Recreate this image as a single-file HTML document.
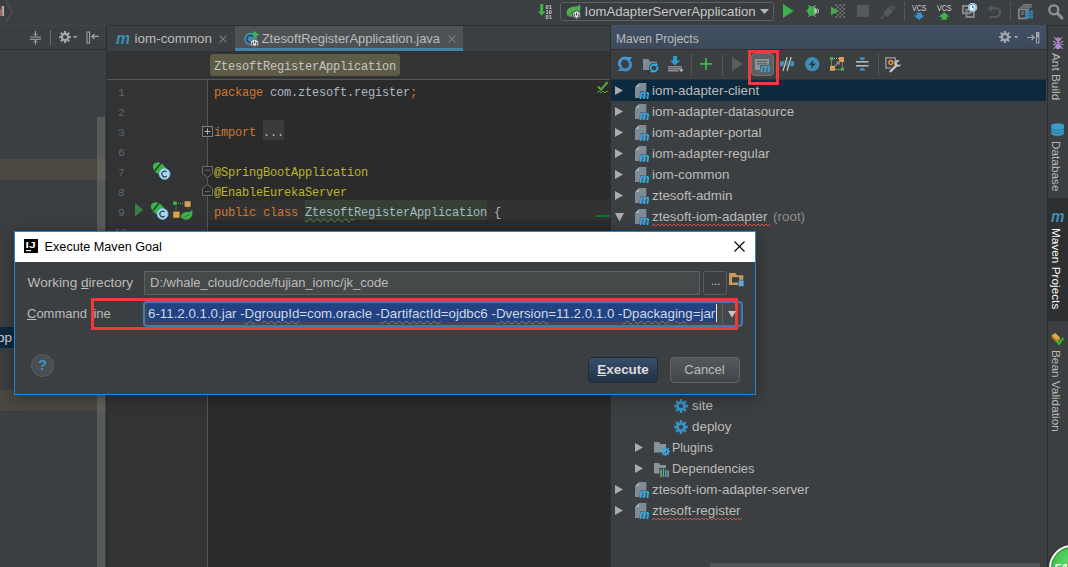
<!DOCTYPE html>
<html>
<head>
<meta charset="utf-8">
<title>Execute Maven Goal</title>
<style>
*{box-sizing:border-box;margin:0;padding:0}
html,body{width:1068px;height:567px;overflow:hidden;background:#3c3f41}
body{position:relative;font-family:"Liberation Sans","Noto Sans CJK SC",sans-serif;font-size:13px;color:#bbbbbb}
.abs{position:absolute}
.ui{font-family:"Liberation Sans","Noto Sans CJK SC",sans-serif;font-size:13.4px;color:#bbbbbb;white-space:nowrap;line-height:16px}
.code{font-family:"Liberation Mono","Noto Sans CJK SC",monospace;font-size:12px;letter-spacing:-0.2px;white-space:pre;line-height:20px;color:#a9b7c6}
.wv{text-decoration:underline wavy #5a8f5a 1px;text-underline-offset:2px}
.kw{color:#cc7832}
.an{color:#bbb529}
.ln{color:#606366;font-size:11.4px}
svg{position:absolute;overflow:visible}
svg text{font-family:"Liberation Sans","Noto Sans CJK SC",sans-serif}
.vt{position:absolute;white-space:nowrap;font-size:11.8px;line-height:14px;transform-origin:0 0;transform:rotate(90deg);color:#bbbbbb}
</style>
</head>
<body>
<!-- top toolbar -->
<div class="abs" style="left:0px;top:0px;width:1068px;height:25px;background:#3c3f41;"></div>
<div class="abs" style="left:0px;top:25px;width:106px;height:1px;background:#45484a;"></div>
<div class="abs" style="left:106px;top:25px;width:505px;height:1px;background:#2d2f30;"></div>
<div class="abs" style="left:1046px;top:25px;width:22px;height:1px;background:#2d2f30;"></div>
<!-- left panel -->
<div class="abs" style="left:0px;top:26px;width:106px;height:541px;background:#3c3f41;"></div>
<div class="abs" style="left:0px;top:49px;width:106px;height:1px;background:#2d2f30;"></div>
<div class="abs" style="left:0px;top:159px;width:106px;height:21px;background:#4a4840;"></div>
<div class="abs" style="left:0px;top:327px;width:14px;height:21px;background:#0d293e;"></div>
<div class="abs" style="left:0px;top:390px;width:106px;height:21px;background:#4a4840;"></div>
<div class="abs ui" style="left:-3px;top:330px;color:#d8dadc">pp</div>
<div class="abs" style="left:97px;top:117px;width:8px;height:450px;background:rgba(128,128,128,0.42);"></div>
<!-- editor -->
<div class="abs" style="left:106px;top:26px;width:505px;height:25px;background:#3c3f41;"></div>
<div class="abs" style="left:106px;top:26px;width:1px;height:541px;background:#2b2b2b;"></div>
<div class="abs" style="left:107px;top:51px;width:504px;height:28px;background:#313335;"></div>
<div class="abs" style="left:107px;top:79px;width:504px;height:1px;background:#555555;"></div>
<div class="abs" style="left:107px;top:80px;width:100px;height:487px;background:#313335;"></div>
<div class="abs" style="left:207px;top:80px;width:1px;height:487px;background:#555555;"></div>
<div class="abs" style="left:208px;top:80px;width:403px;height:487px;background:#2b2b2b;"></div>
<div class="abs" style="left:208px;top:200px;width:402px;height:20px;background:#323232;"></div>
<div class="abs" style="left:305px;top:200px;width:182px;height:20px;background:#344134;"></div>
<div class="abs code ln" style="left:118px;top:83px;">1</div>
<div class="abs code ln" style="left:118px;top:103px;">2</div>
<div class="abs code ln" style="left:118px;top:123px;">3</div>
<div class="abs code ln" style="left:118px;top:143px;">6</div>
<div class="abs code ln" style="left:118px;top:163px;">7</div>
<div class="abs code ln" style="left:118px;top:183px;">8</div>
<div class="abs code ln" style="left:118px;top:203px;">9</div>
<div class="abs code ln" style="left:114px;top:223px;">10</div>
<div class="abs code" style="left:214px;top:83px;"><span class="kw">package</span> com.ztesoft.register<span class="kw">;</span></div>
<div class="abs" style="left:263px;top:120px;width:21px;height:20px;background:#3a3a3a;"></div>
<div class="abs code" style="left:214px;top:123px;"><span class="kw">import</span> ...</div>
<div class="abs code an" style="left:214px;top:163px;">@SpringBootApplication</div>
<div class="abs code an" style="left:214px;top:183px;">@EnableEurekaServer</div>
<div class="abs code" style="left:214px;top:203px;"><span class="kw">public class</span> <span class="wv">Ztesoft</span>RegisterApplication {</div>
<div class="abs" style="left:210px;top:54px;width:190px;height:22px;background:#5e5c46;border-radius:3px"></div>
<div class="abs code" style="left:214px;top:57px;color:#c4c7c8">ZtesoftRegisterApplication</div>
<div class="abs" style="left:235px;top:26px;width:228px;height:25px;background:#4e5254;"></div>
<div class="abs" style="left:235px;top:48px;width:228px;height:3px;background:#4584a6;"></div>
<div class="abs ui" style="left:134.6px;top:31px;">iom-common</div>
<div class="abs ui" style="left:261.7px;top:31px;font-size:12.95px">ZtesoftRegisterApplication.java</div>
<!-- maven panel -->
<div class="abs" style="left:611px;top:26px;width:435px;height:541px;background:#3c3f41;"></div>
<div class="abs" style="left:610px;top:26px;width:1px;height:541px;background:#2b2d2e;"></div>
<div class="abs" style="left:611px;top:25px;width:435px;height:24px;background:linear-gradient(#435064,#3d4a5b);"></div>
<div class="abs" style="left:611px;top:49px;width:435px;height:1px;background:#2d2f30;"></div>
<div class="abs" style="left:611px;top:79px;width:435px;height:1px;background:#323436;"></div>
<div class="abs ui" style="left:616px;top:30.5px;font-size:12px">Maven Projects</div>
<div class="abs" style="left:611px;top:80px;width:435px;height:21px;background:#0d293e;"></div>
<svg style="left:614.5px;top:86px" width="9" height="9" viewBox="0 0 9 9"><path d="M0 0 8 4.5 0 9Z" fill="#a9abad"/></svg>
<svg style="left:634.8px;top:83px" width="15" height="16" viewBox="0 0 15 16"><path d="M4.2 0H11.3V15H0V4.2Z" fill="#7d8b95"/><path d="M0.3 3.9 3.9 0.3V3.9Z" fill="#aab6be"/><text x="4.6" y="15.7" font-size="12.4" font-style="italic" font-weight="bold" fill="#35b0e8" stroke="#0d293e" stroke-width="1" paint-order="stroke" textLength="10" lengthAdjust="spacingAndGlyphs">m</text></svg>
<div class="abs ui" style="left:652px;top:83px;">iom-adapter-client</div>
<svg style="left:614.5px;top:107px" width="9" height="9" viewBox="0 0 9 9"><path d="M0 0 8 4.5 0 9Z" fill="#a9abad"/></svg>
<svg style="left:634.8px;top:104px" width="15" height="16" viewBox="0 0 15 16"><path d="M4.2 0H11.3V15H0V4.2Z" fill="#7d8b95"/><path d="M0.3 3.9 3.9 0.3V3.9Z" fill="#aab6be"/><text x="4.6" y="15.7" font-size="12.4" font-style="italic" font-weight="bold" fill="#35b0e8" stroke="#3c3f41" stroke-width="1" paint-order="stroke" textLength="10" lengthAdjust="spacingAndGlyphs">m</text></svg>
<div class="abs ui" style="left:652px;top:104px;">iom-adapter-datasource</div>
<svg style="left:614.5px;top:128px" width="9" height="9" viewBox="0 0 9 9"><path d="M0 0 8 4.5 0 9Z" fill="#a9abad"/></svg>
<svg style="left:634.8px;top:125px" width="15" height="16" viewBox="0 0 15 16"><path d="M4.2 0H11.3V15H0V4.2Z" fill="#7d8b95"/><path d="M0.3 3.9 3.9 0.3V3.9Z" fill="#aab6be"/><text x="4.6" y="15.7" font-size="12.4" font-style="italic" font-weight="bold" fill="#35b0e8" stroke="#3c3f41" stroke-width="1" paint-order="stroke" textLength="10" lengthAdjust="spacingAndGlyphs">m</text></svg>
<div class="abs ui" style="left:652px;top:125px;">iom-adapter-portal</div>
<svg style="left:614.5px;top:149px" width="9" height="9" viewBox="0 0 9 9"><path d="M0 0 8 4.5 0 9Z" fill="#a9abad"/></svg>
<svg style="left:634.8px;top:146px" width="15" height="16" viewBox="0 0 15 16"><path d="M4.2 0H11.3V15H0V4.2Z" fill="#7d8b95"/><path d="M0.3 3.9 3.9 0.3V3.9Z" fill="#aab6be"/><text x="4.6" y="15.7" font-size="12.4" font-style="italic" font-weight="bold" fill="#35b0e8" stroke="#3c3f41" stroke-width="1" paint-order="stroke" textLength="10" lengthAdjust="spacingAndGlyphs">m</text></svg>
<div class="abs ui" style="left:652px;top:146px;">iom-adapter-regular</div>
<svg style="left:614.5px;top:170px" width="9" height="9" viewBox="0 0 9 9"><path d="M0 0 8 4.5 0 9Z" fill="#a9abad"/></svg>
<svg style="left:634.8px;top:167px" width="15" height="16" viewBox="0 0 15 16"><path d="M4.2 0H11.3V15H0V4.2Z" fill="#7d8b95"/><path d="M0.3 3.9 3.9 0.3V3.9Z" fill="#aab6be"/><text x="4.6" y="15.7" font-size="12.4" font-style="italic" font-weight="bold" fill="#35b0e8" stroke="#3c3f41" stroke-width="1" paint-order="stroke" textLength="10" lengthAdjust="spacingAndGlyphs">m</text></svg>
<div class="abs ui" style="left:652px;top:167px;">iom-common</div>
<svg style="left:614.5px;top:191px" width="9" height="9" viewBox="0 0 9 9"><path d="M0 0 8 4.5 0 9Z" fill="#a9abad"/></svg>
<svg style="left:634.8px;top:188px" width="15" height="16" viewBox="0 0 15 16"><path d="M4.2 0H11.3V15H0V4.2Z" fill="#7d8b95"/><path d="M0.3 3.9 3.9 0.3V3.9Z" fill="#aab6be"/><text x="4.6" y="15.7" font-size="12.4" font-style="italic" font-weight="bold" fill="#35b0e8" stroke="#3c3f41" stroke-width="1" paint-order="stroke" textLength="10" lengthAdjust="spacingAndGlyphs">m</text></svg>
<div class="abs ui" style="left:652px;top:188px;">ztesoft-admin</div>
<svg style="left:614.5px;top:213px" width="9" height="9" viewBox="0 0 9 9"><path d="M0 0H9L4.5 8.5Z" fill="#a9abad"/></svg>
<svg style="left:634.8px;top:209px" width="15" height="16" viewBox="0 0 15 16"><path d="M4.2 0H11.3V15H0V4.2Z" fill="#7d8b95"/><path d="M0.3 3.9 3.9 0.3V3.9Z" fill="#aab6be"/><text x="4.6" y="15.7" font-size="12.4" font-style="italic" font-weight="bold" fill="#35b0e8" stroke="#3c3f41" stroke-width="1" paint-order="stroke" textLength="10" lengthAdjust="spacingAndGlyphs">m</text></svg>
<div class="abs ui" style="left:652px;top:209px;">ztesoft-iom-adapter <span style="color:#8c8c8c;margin-left:2px">(root)</span></div>
<svg style="left:674px;top:399px" width="14" height="14" viewBox="0 0 14 14"><path d="M13.90 5.80 L13.90 8.20 L11.90 8.18 L11.30 9.63 L12.73 11.03 L11.03 12.73 L9.63 11.30 L8.18 11.90 L8.20 13.90 L5.80 13.90 L5.82 11.90 L4.37 11.30 L2.97 12.73 L1.27 11.03 L2.70 9.63 L2.10 8.18 L0.10 8.20 L0.10 5.80 L2.10 5.82 L2.70 4.37 L1.27 2.97 L2.97 1.27 L4.37 2.70 L5.82 2.10 L5.80 0.10 L8.20 0.10 L8.18 2.10 L9.63 2.70 L11.03 1.27 L12.73 2.97 L11.30 4.37 L11.90 5.82Z M9.10 7.00 A2.1 2.1 0 1 0 4.90 7.00 A2.1 2.1 0 1 0 9.10 7.00Z" fill="#3592c4" fill-rule="evenodd"/></svg>
<div class="abs ui" style="left:692px;top:398px;">site</div>
<svg style="left:674px;top:420px" width="14" height="14" viewBox="0 0 14 14"><path d="M13.90 5.80 L13.90 8.20 L11.90 8.18 L11.30 9.63 L12.73 11.03 L11.03 12.73 L9.63 11.30 L8.18 11.90 L8.20 13.90 L5.80 13.90 L5.82 11.90 L4.37 11.30 L2.97 12.73 L1.27 11.03 L2.70 9.63 L2.10 8.18 L0.10 8.20 L0.10 5.80 L2.10 5.82 L2.70 4.37 L1.27 2.97 L2.97 1.27 L4.37 2.70 L5.82 2.10 L5.80 0.10 L8.20 0.10 L8.18 2.10 L9.63 2.70 L11.03 1.27 L12.73 2.97 L11.30 4.37 L11.90 5.82Z M9.10 7.00 A2.1 2.1 0 1 0 4.90 7.00 A2.1 2.1 0 1 0 9.10 7.00Z" fill="#3592c4" fill-rule="evenodd"/></svg>
<div class="abs ui" style="left:692px;top:419px;">deploy</div>
<svg style="left:635.0px;top:443px" width="9" height="9" viewBox="0 0 9 9"><path d="M0 0 8 4.5 0 9Z" fill="#a9abad"/></svg>
<svg style="left:653.7px;top:442px" width="16" height="14" viewBox="0 0 16 14"><path d="M0 0H5L6.5 2H12V10.5H0Z" fill="#87939a"/><path d="M16.03 8.71 L16.03 10.29 L14.72 10.27 L14.32 11.23 L15.26 12.15 L14.15 13.26 L13.23 12.32 L12.27 12.72 L12.29 14.03 L10.71 14.03 L10.73 12.72 L9.77 12.32 L8.85 13.26 L7.74 12.15 L8.68 11.23 L8.28 10.27 L6.97 10.29 L6.97 8.71 L8.28 8.73 L8.68 7.77 L7.74 6.85 L8.85 5.74 L9.77 6.68 L10.73 6.28 L10.71 4.97 L12.29 4.97 L12.27 6.28 L13.23 6.68 L14.15 5.74 L15.26 6.85 L14.32 7.77 L14.72 8.73Z M13.00 9.50 A1.5 1.5 0 1 0 10.00 9.50 A1.5 1.5 0 1 0 13.00 9.50Z" fill="#35a8e0" fill-rule="evenodd"/></svg>
<div class="abs ui" style="left:672px;top:440px;font-size:12.5px">Plugins</div>
<svg style="left:635.0px;top:464px" width="9" height="9" viewBox="0 0 9 9"><path d="M0 0 8 4.5 0 9Z" fill="#a9abad"/></svg>
<svg style="left:653.7px;top:463px" width="16" height="14" viewBox="0 0 16 14"><path d="M0 0H5L6.5 2H12V10.5H0Z" fill="#87939a"/><rect x="5.5" y="5" width="10" height="9" fill="#3c3f41"/><rect x="6.5" y="6.5" width="1.3" height="7.5" fill="#9aa7b0"/><rect x="8.8" y="5.5" width="1.3" height="8.5" fill="#62b543"/><rect x="11.1" y="6.5" width="1.3" height="7.5" fill="#40b6e0"/><rect x="13.4" y="7.5" width="1.3" height="6.5" fill="#9aa7b0"/></svg>
<div class="abs ui" style="left:672px;top:461px;font-size:12.9px">Dependencies</div>
<svg style="left:614.5px;top:485px" width="9" height="9" viewBox="0 0 9 9"><path d="M0 0 8 4.5 0 9Z" fill="#a9abad"/></svg>
<svg style="left:634.8px;top:482px" width="15" height="16" viewBox="0 0 15 16"><path d="M4.2 0H11.3V15H0V4.2Z" fill="#7d8b95"/><path d="M0.3 3.9 3.9 0.3V3.9Z" fill="#aab6be"/><text x="4.6" y="15.7" font-size="12.4" font-style="italic" font-weight="bold" fill="#35b0e8" stroke="#3c3f41" stroke-width="1" paint-order="stroke" textLength="10" lengthAdjust="spacingAndGlyphs">m</text></svg>
<div class="abs ui" style="left:652px;top:482px;">ztesoft-iom-adapter-server</div>
<svg style="left:614.5px;top:506px" width="9" height="9" viewBox="0 0 9 9"><path d="M0 0 8 4.5 0 9Z" fill="#a9abad"/></svg>
<svg style="left:634.8px;top:503px" width="15" height="16" viewBox="0 0 15 16"><path d="M4.2 0H11.3V15H0V4.2Z" fill="#7d8b95"/><path d="M0.3 3.9 3.9 0.3V3.9Z" fill="#aab6be"/><text x="4.6" y="15.7" font-size="12.4" font-style="italic" font-weight="bold" fill="#35b0e8" stroke="#3c3f41" stroke-width="1" paint-order="stroke" textLength="10" lengthAdjust="spacingAndGlyphs">m</text></svg>
<div class="abs ui" style="left:652px;top:503px;">ztesoft-register</div>
<svg style="left:652px;top:223.5px" width="117" height="3" viewBox="0 0 117 3"><path d="M0 2 L2 0 L4 2 L6 0 L8 2 L10 0 L12 2 L14 0 L16 2 L18 0 L20 2 L22 0 L24 2 L26 0 L28 2 L30 0 L32 2 L34 0 L36 2 L38 0 L40 2 L42 0 L44 2 L46 0 L48 2 L50 0 L52 2 L54 0 L56 2 L58 0 L60 2 L62 0 L64 2 L66 0 L68 2 L70 0 L72 2 L74 0 L76 2 L78 0 L80 2 L82 0 L84 2 L86 0 L88 2 L90 0 L92 2 L94 0 L96 2 L98 0 L100 2 L102 0 L104 2 L106 0 L108 2 L110 0 L112 2 L114 0 L116 2 L118 0" fill="none" stroke="#d25252" stroke-width="1"/></svg>
<svg style="left:652px;top:517.5px" width="89" height="3" viewBox="0 0 89 3"><path d="M0 2 L2 0 L4 2 L6 0 L8 2 L10 0 L12 2 L14 0 L16 2 L18 0 L20 2 L22 0 L24 2 L26 0 L28 2 L30 0 L32 2 L34 0 L36 2 L38 0 L40 2 L42 0 L44 2 L46 0 L48 2 L50 0 L52 2 L54 0 L56 2 L58 0 L60 2 L62 0 L64 2 L66 0 L68 2 L70 0 L72 2 L74 0 L76 2 L78 0 L80 2 L82 0 L84 2 L86 0 L88 2 L90 0" fill="none" stroke="#d25252" stroke-width="1"/></svg>
<!-- maven toolbar icons -->
<svg style="left:618px;top:57px" width="14" height="14" viewBox="0 0 14 14"><path d="M9.3 1.9A5.2 5.2 0 0 0 2.6 9.6" fill="none" stroke="#4597d2" stroke-width="3"/><path d="M4.7 12.1A5.2 5.2 0 0 0 11.4 4.4" fill="none" stroke="#3d8cc6" stroke-width="3"/><path d="M0 14H7.2L3.4 8.4Z" fill="#3d8cc6"/><path d="M14 0H6.8L10.6 5.6Z" fill="#4597d2"/></svg>
<svg style="left:643px;top:59px" width="16" height="14" viewBox="0 0 16 14"><path d="M0 0H5.4L6.8 2.4H13.9V11H0Z" fill="#7d8b95"/><circle cx="11" cy="9" r="5.2" fill="#3c3f41"/><path d="M7.8 10.4A3.3 3.3 0 0 1 12.4 6.1" fill="none" stroke="#2fb0e8" stroke-width="1.6"/><path d="M14.2 7.6A3.3 3.3 0 0 1 9.6 11.9" fill="none" stroke="#2fb0e8" stroke-width="1.6"/><path d="M10.8 4.4 14.8 5 13.2 8.6Z" fill="#2fb0e8"/><path d="M11.2 13.6 7.2 13 8.8 9.4Z" fill="#2fb0e8"/></svg>
<svg style="left:668px;top:56px" width="16" height="16" viewBox="0 0 16 16"><path d="M5 0H9V4.5H12.2L7 9.6 1.8 4.5H5Z" fill="#2f9ad6"/><rect x="0" y="10.3" width="14" height="1.1" fill="#a8abad"/><rect x="0" y="12.3" width="14" height="1.1" fill="#a8abad"/><rect x="0" y="14.3" width="10.5" height="1.1" fill="#a8abad"/><path d="M11 13.6H15.6L13.3 16Z" fill="#c8cacc"/></svg>
<svg style="left:691px;top:54px" width="1" height="22" viewBox="0 0 1 22"><rect x="0" y="0" width="1" height="1" fill="#6a6d6f"/><rect x="0" y="2" width="1" height="1" fill="#6a6d6f"/><rect x="0" y="4" width="1" height="1" fill="#6a6d6f"/><rect x="0" y="6" width="1" height="1" fill="#6a6d6f"/><rect x="0" y="8" width="1" height="1" fill="#6a6d6f"/><rect x="0" y="10" width="1" height="1" fill="#6a6d6f"/><rect x="0" y="12" width="1" height="1" fill="#6a6d6f"/><rect x="0" y="14" width="1" height="1" fill="#6a6d6f"/><rect x="0" y="16" width="1" height="1" fill="#6a6d6f"/><rect x="0" y="18" width="1" height="1" fill="#6a6d6f"/><rect x="0" y="20" width="1" height="1" fill="#6a6d6f"/></svg>
<svg style="left:699.7px;top:58px" width="12" height="12" viewBox="0 0 12 12"><rect x="5.1" y="0" width="1.8" height="11.8" fill="#3fb54a"/><rect x="0" y="5" width="11.9" height="1.8" fill="#3fb54a"/></svg>
<svg style="left:722px;top:54px" width="1" height="22" viewBox="0 0 1 22"><rect x="0" y="0" width="1" height="1" fill="#6a6d6f"/><rect x="0" y="2" width="1" height="1" fill="#6a6d6f"/><rect x="0" y="4" width="1" height="1" fill="#6a6d6f"/><rect x="0" y="6" width="1" height="1" fill="#6a6d6f"/><rect x="0" y="8" width="1" height="1" fill="#6a6d6f"/><rect x="0" y="10" width="1" height="1" fill="#6a6d6f"/><rect x="0" y="12" width="1" height="1" fill="#6a6d6f"/><rect x="0" y="14" width="1" height="1" fill="#6a6d6f"/><rect x="0" y="16" width="1" height="1" fill="#6a6d6f"/><rect x="0" y="18" width="1" height="1" fill="#6a6d6f"/><rect x="0" y="20" width="1" height="1" fill="#6a6d6f"/></svg>
<svg style="left:732px;top:57px" width="11" height="14" viewBox="0 0 11 14"><path d="M0 0 10.5 7 0 14Z" fill="#5b5e60"/></svg>
<div class="abs" style="left:751px;top:53px;width:23px;height:23px;background:#5c6062;border:1px solid #717476;border-radius:4px"></div>
<svg style="left:755px;top:59px" width="16" height="14" viewBox="0 0 16 14"><rect x="0" y="0" width="14" height="11" fill="#8a959c"/><rect x="1.8" y="1.8" width="10.4" height="1.2" fill="#5c6062"/><rect x="1.8" y="4.2" width="10.4" height="1.2" fill="#5c6062"/><rect x="5" y="6" width="10" height="6" fill="#5c6062"/><text x="5.6" y="13" font-size="11.5" font-style="italic" font-weight="bold" fill="#35a8e0">m</text></svg>
<div class="abs" style="left:748px;top:50px;width:31px;height:35px;background:transparent;border:3px solid #f03a3a"></div>
<svg style="left:780px;top:57px" width="14" height="14" viewBox="0 0 14 14"><rect x="0" y="4.2" width="14" height="5" fill="#3d93b8"/><path d="M3 14 7.2 0M7 14 11.2 0" stroke="#3c3f41" stroke-width="2.6"/><path d="M3 14 7.2 0M7 14 11.2 0" stroke="#c4c6c8" stroke-width="1.2"/></svg>
<svg style="left:804.6px;top:56.6px" width="15" height="15" viewBox="0 0 15 15"><circle cx="7.2" cy="7.2" r="7.1" fill="#3d8db2"/><path d="M8.6 2.4 3.8 8H6.8L5.8 12.2 10.8 6.4H7.6Z" fill="#2a3840"/></svg>
<svg style="left:829.7px;top:57px" width="14" height="14" viewBox="0 0 14 14"><path d="M1.5 3.5V10M4 1.5H9.5M12.5 5.5V11M5.5 12.5H11" stroke="#b0b3b5" stroke-width="1" stroke-dasharray="1 1" fill="none"/><rect x="0" y="0" width="3.2" height="3.2" fill="#3cb54a"/><rect x="10.8" y="10.6" width="3.2" height="3.2" fill="#3cb54a"/><rect x="9" y="0" width="5" height="5" fill="#d9a04e"/><rect x="0" y="8.8" width="5" height="5" fill="#d9a04e"/><path d="M5 9 8.6 5.4M6.2 5H9V7.8" stroke="#8f9294" stroke-width="1.2" fill="none"/></svg>
<svg style="left:855.6px;top:57px" width="13" height="14" viewBox="0 0 13 14"><rect x="0" y="4" width="12.6" height="1.6" fill="#b4b7b9"/><rect x="0" y="8" width="12.6" height="1.6" fill="#b4b7b9"/><path d="M2.8 0.4H9.8L6.3 3.8Z" fill="#3a98d6"/><path d="M2.8 13.6H9.8L6.3 10.2Z" fill="#3a98d6"/></svg>
<svg style="left:878px;top:54px" width="1" height="22" viewBox="0 0 1 22"><rect x="0" y="0" width="1" height="1" fill="#6a6d6f"/><rect x="0" y="2" width="1" height="1" fill="#6a6d6f"/><rect x="0" y="4" width="1" height="1" fill="#6a6d6f"/><rect x="0" y="6" width="1" height="1" fill="#6a6d6f"/><rect x="0" y="8" width="1" height="1" fill="#6a6d6f"/><rect x="0" y="10" width="1" height="1" fill="#6a6d6f"/><rect x="0" y="12" width="1" height="1" fill="#6a6d6f"/><rect x="0" y="14" width="1" height="1" fill="#6a6d6f"/><rect x="0" y="16" width="1" height="1" fill="#6a6d6f"/><rect x="0" y="18" width="1" height="1" fill="#6a6d6f"/><rect x="0" y="20" width="1" height="1" fill="#6a6d6f"/></svg>
<svg style="left:884.7px;top:56.5px" width="17" height="16" viewBox="0 0 17 16"><path d="M0.8 0.8H10.2V11H0.8Z" fill="none" stroke="#8a8d8f" stroke-width="1.6"/><path d="M5.8 2.6 8.4 4.1V7.1L5.8 8.6 3.2 7.1V4.1Z" fill="#e8912b"/><circle cx="5.8" cy="5.6" r="1.2" fill="#3c3f41"/><path d="M5.6 14.2 11.6 8.2" stroke="#3c3f41" stroke-width="4.6" stroke-linecap="round"/><path d="M5.6 14.2 11.6 8.2" stroke="#c2c4c6" stroke-width="2.4" stroke-linecap="round"/><path d="M14.6 3.6A3.4 3.4 0 1 0 16 7.4L13 8 11.6 6Z" fill="#c2c4c6"/></svg>
<!-- maven header icons -->
<svg style="left:999px;top:31.4px" width="12" height="12" viewBox="0 0 12 12"><path d="M11.91 4.97 L11.91 7.03 L10.20 7.01 L9.68 8.26 L10.91 9.45 L9.45 10.91 L8.26 9.68 L7.01 10.20 L7.03 11.91 L4.97 11.91 L4.99 10.20 L3.74 9.68 L2.55 10.91 L1.09 9.45 L2.32 8.26 L1.80 7.01 L0.09 7.03 L0.09 4.97 L1.80 4.99 L2.32 3.74 L1.09 2.55 L2.55 1.09 L3.74 2.32 L4.99 1.80 L4.97 0.09 L7.03 0.09 L7.01 1.80 L8.26 2.32 L9.45 1.09 L10.91 2.55 L9.68 3.74 L10.20 4.99Z M8.00 6.00 A2 2 0 1 0 4.00 6.00 A2 2 0 1 0 8.00 6.00Z" fill="#a2a5a7" fill-rule="evenodd"/></svg>
<svg style="left:1013.5px;top:36px" width="5" height="3" viewBox="0 0 5 3"><path d="M0 0H4.4L2.2 2.6Z" fill="#a2a5a7"/></svg>
<svg style="left:1027px;top:32px" width="13" height="12" viewBox="0 0 13 12"><path d="M0 5.5H7M4.6 3 7.2 5.5 4.6 8" stroke="#a2a5a7" stroke-width="1.1" fill="none"/><rect x="9.5" y="0.5" width="2.4" height="10.4" fill="none" stroke="#a2a5a7" stroke-width="1"/><rect x="9.5" y="0.5" width="2.4" height="5" fill="#a2a5a7"/></svg>
<!-- top toolbar icons -->
<svg style="left:0px;top:0px" width="13" height="25" viewBox="0 0 13 25"><rect x="0" y="9" width="1.2" height="7" fill="#c75450"/><rect x="1.6" y="6" width="1.2" height="10" fill="#9fc4a0"/><rect x="3" y="6" width="1" height="10" fill="#c8a0d0"/><path d="M5.5 0 12 11.5 5.5 23" fill="none" stroke="#555759" stroke-width="1"/></svg>
<svg style="left:538px;top:3.5px" width="16" height="16" viewBox="0 0 16 16"><path d="M2.2 0H5.2V7.6H7.4L3.7 11.6 0 7.6H2.2Z" fill="#3fb54a"/><text x="7.6" y="5" font-size="5.6" fill="#c8cacc" font-weight="bold">01</text><text x="7.6" y="10" font-size="5.6" fill="#c8cacc" font-weight="bold">10</text><text x="7.6" y="15" font-size="5.6" fill="#c8cacc" font-weight="bold">01</text></svg>
<div class="abs" style="left:560px;top:2px;width:214px;height:19px;background:#3a3d3f;border:1px solid #5d6062;border-radius:3px"></div>
<svg style="left:565.6px;top:3.5px" width="16" height="16" viewBox="0 0 16 16"><path d="M0.6 10.2C-0.4 4.6 5.6 2.4 9.6 2.6C11.6 2.6 13 1.6 13.8 0.2C15.4 5 14 10.4 9 12.4C5.4 13.6 2.2 12.4 0.6 10.2Z" fill="#4caf50"/><path d="M1.4 11.6C4 9.6 7.6 7.4 11 6.4" stroke="#2e7d32" stroke-width="0.9" fill="none"/><path d="M10.6 6.6 14.4 8.8V13.2L10.6 15.4 6.8 13.2V8.8Z" fill="#e4e4e4" stroke="#3a3d3f" stroke-width="0.8"/><path d="M9 10A2.4 2.4 0 1 0 12.2 10M10.6 8.6V11.4" stroke="#4a4d4f" stroke-width="1.1" fill="none"/></svg>
<div class="abs ui" style="left:584.5px;top:3.5px;font-size:13.17px;color:#c4c6c8">IomAdapterServerApplication</div>
<svg style="left:760px;top:9.4px" width="10" height="6" viewBox="0 0 10 6"><path d="M0 0H9L4.5 5Z" fill="#b4b6b8"/></svg>
<svg style="left:783px;top:4px" width="11" height="14" viewBox="0 0 11 14"><path d="M0 0 10.6 7 0 14Z" fill="#3fae4c"/></svg>
<svg style="left:805.5px;top:4px" width="15" height="14" viewBox="0 0 15 14"><path d="M2 1 4.4 3.6M2 13 4.4 10.4M9.4 1 8 3.4M9.4 13 8 10.6M0 7H2" stroke="#9a9d9f" stroke-width="0.9" fill="none"/><ellipse cx="6" cy="7" rx="4.6" ry="5" fill="#3fb54a"/><path d="M6 2V12" stroke="#2e8f3a" stroke-width="0.8"/><path d="M9.2 3.6A4 4 0 0 1 9.2 10.4A6 6 0 0 1 9.2 3.6Z" fill="#b6b8ba"/><path d="M11.6 4.6A4 4 0 0 1 11.6 9.4" stroke="#c6c8ca" stroke-width="1" fill="none"/></svg>
<svg style="left:831px;top:4px" width="14" height="14" viewBox="0 0 14 14"><rect x="4.4" y="0.2" width="1.4" height="1.4" fill="#8f9294"/><rect x="8.4" y="0.2" width="1.4" height="1.4" fill="#8f9294"/><rect x="12.4" y="0.2" width="1.4" height="1.4" fill="#8f9294"/><rect x="6.4" y="2.2" width="1.4" height="1.4" fill="#8f9294"/><rect x="10.4" y="2.2" width="1.4" height="1.4" fill="#8f9294"/><rect x="4.4" y="4.2" width="1.4" height="1.4" fill="#8f9294"/><rect x="8.4" y="4.2" width="1.4" height="1.4" fill="#8f9294"/><rect x="12.4" y="4.2" width="1.4" height="1.4" fill="#8f9294"/><rect x="6.4" y="6.2" width="1.4" height="1.4" fill="#8f9294"/><rect x="10.4" y="6.2" width="1.4" height="1.4" fill="#8f9294"/><rect x="4.4" y="8.2" width="1.4" height="1.4" fill="#8f9294"/><rect x="8.4" y="8.2" width="1.4" height="1.4" fill="#8f9294"/><rect x="12.4" y="8.2" width="1.4" height="1.4" fill="#8f9294"/><rect x="6.4" y="10.2" width="1.4" height="1.4" fill="#8f9294"/><rect x="10.4" y="10.2" width="1.4" height="1.4" fill="#8f9294"/><rect x="4.4" y="12.2" width="1.4" height="1.4" fill="#8f9294"/><rect x="8.4" y="12.2" width="1.4" height="1.4" fill="#8f9294"/><rect x="12.4" y="12.2" width="1.4" height="1.4" fill="#8f9294"/><path d="M0 2.4 7 7 0 11.6Z" fill="#3fae4c"/></svg>
<svg style="left:857px;top:5px" width="12" height="12" viewBox="0 0 12 12"><rect x="0" y="0" width="12" height="12" fill="#56595b"/></svg>
<svg style="left:880px;top:3.5px" width="16" height="16" viewBox="0 0 16 16"><path d="M1 14.6 4.6 11" stroke="#56595b" stroke-width="1.8"/><path d="M3.4 8.2 8.6 3 13 7.4 7.8 12.6C6 13 3.6 10.6 3.4 8.2Z" fill="#56595b"/><path d="M10 4.4 13 1.4M11.8 6.2 14.8 3.2" stroke="#56595b" stroke-width="1.6"/></svg>
<svg style="left:904px;top:2px" width="1" height="20" viewBox="0 0 1 20"><rect x="0" y="0" width="1" height="1" fill="#6a6d6f"/><rect x="0" y="2" width="1" height="1" fill="#6a6d6f"/><rect x="0" y="4" width="1" height="1" fill="#6a6d6f"/><rect x="0" y="6" width="1" height="1" fill="#6a6d6f"/><rect x="0" y="8" width="1" height="1" fill="#6a6d6f"/><rect x="0" y="10" width="1" height="1" fill="#6a6d6f"/><rect x="0" y="12" width="1" height="1" fill="#6a6d6f"/><rect x="0" y="14" width="1" height="1" fill="#6a6d6f"/><rect x="0" y="16" width="1" height="1" fill="#6a6d6f"/><rect x="0" y="18" width="1" height="1" fill="#6a6d6f"/></svg>
<svg style="left:912px;top:3.5px" width="16" height="16" viewBox="0 0 16 16"><text x="0" y="6.6" font-size="8.6" fill="#d0d2d4" textLength="14.6" lengthAdjust="spacingAndGlyphs">VCS</text><path d="M4.6 8.4H9.8V11.4H12.6L7.2 16 1.8 11.4H4.6Z" fill="#3592c4"/></svg>
<svg style="left:937px;top:3.5px" width="16" height="16" viewBox="0 0 16 16"><text x="0" y="6.6" font-size="8.6" fill="#d0d2d4" textLength="14.6" lengthAdjust="spacingAndGlyphs">VCS</text><path d="M7.2 8.2 12.6 12.8H9.8V15.8H4.6V12.8H1.8Z" fill="#3fb54a"/></svg>
<svg style="left:962px;top:3px" width="16" height="16" viewBox="0 0 16 16"><rect x="0.9" y="2.9" width="7.4" height="7.4" fill="none" stroke="#8a8d8f" stroke-width="1.8"/><rect x="4.4" y="6.6" width="7.4" height="7.4" fill="none" stroke="#8a8d8f" stroke-width="1.8"/><circle cx="10.6" cy="4.6" r="4.6" fill="#cfe6f7"/><circle cx="10.6" cy="4.6" r="3.7" fill="#eaf4fc" stroke="#5aa2d8" stroke-width="1"/><path d="M10.6 2.4V4.8H12.4" stroke="#2b5f8c" stroke-width="0.9" fill="none"/></svg>
<svg style="left:987px;top:4.6px" width="14" height="13" viewBox="0 0 14 13"><path d="M4 3.2H8.6A4.4 4.4 0 0 1 8.6 12H2.6" fill="none" stroke="#56595b" stroke-width="2.2"/><path d="M5.4 -0.4V6.8L0 3.2Z" fill="#56595b"/></svg>
<svg style="left:1010px;top:2px" width="1" height="20" viewBox="0 0 1 20"><rect x="0" y="0" width="1" height="1" fill="#6a6d6f"/><rect x="0" y="2" width="1" height="1" fill="#6a6d6f"/><rect x="0" y="4" width="1" height="1" fill="#6a6d6f"/><rect x="0" y="6" width="1" height="1" fill="#6a6d6f"/><rect x="0" y="8" width="1" height="1" fill="#6a6d6f"/><rect x="0" y="10" width="1" height="1" fill="#6a6d6f"/><rect x="0" y="12" width="1" height="1" fill="#6a6d6f"/><rect x="0" y="14" width="1" height="1" fill="#6a6d6f"/><rect x="0" y="16" width="1" height="1" fill="#6a6d6f"/><rect x="0" y="18" width="1" height="1" fill="#6a6d6f"/></svg>
<svg style="left:1018px;top:4px" width="15" height="15" viewBox="0 0 15 15"><path d="M4.6 0.8H12.6V4" stroke="#7d8082" stroke-width="1.6" fill="none"/><path d="M2.4 3H10.4V6" stroke="#7d8082" stroke-width="1.6" fill="none"/><rect x="0.8" y="5.4" width="8" height="9" fill="none" stroke="#8a8d8f" stroke-width="1.6"/><rect x="3" y="7.6" width="3.2" height="1" fill="#8a8d8f"/><rect x="3" y="9.6" width="3.2" height="1" fill="#8a8d8f"/><rect x="7" y="6.6" width="2.2" height="2.2" fill="#3592c4"/><rect x="9.8" y="6.6" width="2.2" height="2.2" fill="#3592c4"/><rect x="12.6" y="6.6" width="2.2" height="2.2" fill="#3592c4"/><rect x="7" y="9.4" width="2.2" height="2.2" fill="#3592c4"/><rect x="9.8" y="9.4" width="2.2" height="2.2" fill="#3592c4"/><rect x="12.6" y="9.4" width="2.2" height="2.2" fill="#3592c4"/><rect x="7" y="12.2" width="2.2" height="2.2" fill="#3592c4"/><rect x="9.8" y="12.2" width="2.2" height="2.2" fill="#3592c4"/><rect x="12.6" y="12.2" width="2.2" height="2.2" fill="#3592c4"/></svg>
<svg style="left:1047.8px;top:4px" width="16" height="16" viewBox="0 0 16 16"><circle cx="5.8" cy="5.8" r="4.5" fill="none" stroke="#8e9193" stroke-width="2.3"/><path d="M9.4 9.4 14 14" stroke="#8e9193" stroke-width="3" stroke-linecap="round"/></svg>
<!-- left header icons -->
<svg style="left:30px;top:31px" width="12" height="14" viewBox="0 0 12 14"><rect x="0" y="5.6" width="11" height="1" fill="#a2a5a7"/><rect x="0" y="7.8" width="11" height="1" fill="#a2a5a7"/><path d="M5.5 0V4.6M3.4 2.6 5.5 4.8 7.6 2.6M5.5 13.6V9.4M3.4 11.4 5.5 9.2 7.6 11.4" stroke="#a2a5a7" stroke-width="1" fill="none"/></svg>
<div class="abs" style="left:50px;top:30px;width:1px;height:15px;background:#6a6d6f;"></div>
<svg style="left:59px;top:31px" width="12" height="12" viewBox="0 0 12 12"><path d="M11.91 4.97 L11.91 7.03 L10.20 7.01 L9.68 8.26 L10.91 9.45 L9.45 10.91 L8.26 9.68 L7.01 10.20 L7.03 11.91 L4.97 11.91 L4.99 10.20 L3.74 9.68 L2.55 10.91 L1.09 9.45 L2.32 8.26 L1.80 7.01 L0.09 7.03 L0.09 4.97 L1.80 4.99 L2.32 3.74 L1.09 2.55 L2.55 1.09 L3.74 2.32 L4.99 1.80 L4.97 0.09 L7.03 0.09 L7.01 1.80 L8.26 2.32 L9.45 1.09 L10.91 2.55 L9.68 3.74 L10.20 4.99Z M8.00 6.00 A2 2 0 1 0 4.00 6.00 A2 2 0 1 0 8.00 6.00Z" fill="#a2a5a7" fill-rule="evenodd"/></svg>
<svg style="left:73.4px;top:36px" width="5" height="3" viewBox="0 0 5 3"><path d="M0 0H4.4L2.2 2.6Z" fill="#a2a5a7"/></svg>
<svg style="left:87px;top:32px" width="13" height="12" viewBox="0 0 13 12"><rect x="0" y="0" width="2.6" height="11" fill="none" stroke="#a2a5a7" stroke-width="1"/><path d="M12 4.4H5M7.4 2 4.8 4.4 7.4 7" stroke="#a2a5a7" stroke-width="1.1" fill="none"/></svg>
<!-- tab icons -->
<svg style="left:116px;top:30px" width="15" height="15" viewBox="0 0 15 15"><text x="0" y="13.6" font-size="17" font-style="italic" font-weight="bold" fill="#3e8fb5" textLength="14" lengthAdjust="spacingAndGlyphs">m</text></svg>
<svg style="left:218.6px;top:34.6px" width="9" height="9" viewBox="0 0 9 9"><path d="M0.6 0.6 7.4 7.4M7.4 0.6 0.6 7.4" stroke="#7a7d7f" stroke-width="1.1"/></svg>
<svg style="left:447.6px;top:34.6px" width="9" height="9" viewBox="0 0 9 9"><path d="M0.6 0.6 7.4 7.4M7.4 0.6 0.6 7.4" stroke="#7a7d7f" stroke-width="1.1"/></svg>
<svg style="left:243.7px;top:30.6px" width="16" height="17" viewBox="0 0 16 17"><circle cx="6.6" cy="8" r="6.4" fill="#3d8db2"/><path d="M9 5.4A3.6 3.6 0 1 0 9 10.6" stroke="#2b3a42" stroke-width="1.4" fill="none"/><path d="M9.4 0 15.4 3.6 9.4 7.2Z" fill="#3fb54a"/><path d="M10.6 8 14.6 10.2V14.4L10.6 16.6 6.6 14.4V10.2Z" fill="#e4e4e4" stroke="#4e5254" stroke-width="0.8"/><path d="M9 11.2A2.4 2.4 0 1 0 12.2 11.2M10.6 9.8V12.6" stroke="#4a4d4f" stroke-width="1.1" fill="none"/></svg>
<!-- gutter icons -->
<svg style="left:153px;top:162px" width="17" height="18" viewBox="0 0 17 18"><g transform="rotate(40 6.5 6)"><ellipse cx="7" cy="6.4" rx="7.6" ry="5.4" fill="#3fae4c"/><path d="M4.6 1.2V10.8" stroke="#1f3a24" stroke-width="1.4"/></g><circle cx="11.6" cy="12" r="5.4" fill="#a8d8f4"/><circle cx="11.6" cy="12" r="5.4" fill="none" stroke="#7cc0ea" stroke-width="0.8"/><path d="M13.6 10A2.8 2.8 0 1 0 13.6 14" stroke="#38434a" stroke-width="1.2" fill="none"/></svg>
<svg style="left:151px;top:202px" width="17" height="18" viewBox="0 0 17 18"><g transform="rotate(40 6.5 6)"><ellipse cx="7" cy="6.4" rx="7.6" ry="5.4" fill="#3fae4c"/><path d="M4.6 1.2V10.8" stroke="#1f3a24" stroke-width="1.4"/></g><circle cx="11.6" cy="12" r="5.4" fill="#a8d8f4"/><circle cx="11.6" cy="12" r="5.4" fill="none" stroke="#7cc0ea" stroke-width="0.8"/><path d="M13.6 10A2.8 2.8 0 1 0 13.6 14" stroke="#38434a" stroke-width="1.2" fill="none"/></svg>
<svg style="left:134.7px;top:202.5px" width="9" height="14" viewBox="0 0 9 14"><path d="M0 0 8.4 6.8 0 13.6Z" fill="#3a7d48"/></svg>
<svg style="left:172.6px;top:201px" width="20" height="19" viewBox="0 0 20 19"><path d="M5 2.4H11M3 5.4V9.6M15 5.4V8" stroke="#9a9d9f" stroke-width="0.9" stroke-dasharray="1 1"/><rect x="0.2" y="0.4" width="3.6" height="3.6" fill="#3cb54a"/><rect x="11.6" y="0.2" width="6" height="5.6" fill="#d9a04e"/><rect x="0.2" y="10.6" width="6.4" height="6.2" fill="#d9a04e"/><path d="M8 16.6C7.4 12 12 10.8 15.4 11C17 11 18.2 10.2 19 9C20.2 13 19 17 15 18.4C12 19.2 9.4 18.4 8 16.6Z" fill="#3fae4c"/><path d="M8.6 18C11 16 14 14.6 17 13.6" stroke="#2a6e34" stroke-width="0.8" fill="none"/></svg>
<svg style="left:201.5px;top:166px" width="11" height="12" viewBox="0 0 11 12"><path d="M0.5 0.5H10.5V7.5L5.5 11.5 0.5 7.5Z" fill="#2b2b2b" stroke="#6a6d6f" stroke-width="1"/><path d="M2.8 4.2H8.2" stroke="#6a6d6f" stroke-width="1"/></svg>
<svg style="left:201.5px;top:184px" width="11" height="12" viewBox="0 0 11 12"><path d="M0.5 11.5H10.5V4.5L5.5 0.5 0.5 4.5Z" fill="#2b2b2b" stroke="#6a6d6f" stroke-width="1"/><path d="M2.8 7.6H8.2" stroke="#6a6d6f" stroke-width="1"/></svg>
<svg style="left:202px;top:126px" width="11" height="11" viewBox="0 0 11 11"><rect x="0.5" y="0.5" width="10" height="10" fill="#2b2b2b" stroke="#7a7d7f" stroke-width="1"/><path d="M2.5 5.5H8.5M5.5 2.5V8.5" stroke="#b2b5b7" stroke-width="1"/></svg>
<svg style="left:597px;top:81px" width="12" height="14" viewBox="0 0 12 14"><path d="M1 5.4 4 8.6 10.6 1" stroke="#5a9e3c" stroke-width="2.2" fill="none"/><path d="M0 12 2 10 4 12 6 10 8 12 10 10 11 11" stroke="#5a9e3c" stroke-width="1" fill="none"/></svg>
<div class="abs" style="left:596px;top:215px;width:14px;height:2px;background:#007d21;"></div>
<!-- right stripe -->
<div class="abs" style="left:1046px;top:26px;width:22px;height:541px;background:#3c3f41;"></div>
<div class="abs" style="left:1047px;top:26px;width:1px;height:541px;background:#2b2d2e;"></div>
<div class="abs" style="left:1047px;top:198px;width:21px;height:123px;background:#2d2f30;"></div>
<div class="vt" style="left:1063.3px;top:53px">Ant Build</div>
<div class="vt" style="left:1063.3px;top:141px">Database</div>
<div class="vt" style="left:1063.3px;top:227.5px;color:#ffffff">Maven Projects</div>
<div class="vt" style="left:1063.3px;top:350px">Bean Validation</div>
<!-- dialog -->
<div class="abs" style="left:14px;top:231px;width:742px;height:164px;background:#3c3f41;border:1px solid #2686d6;box-shadow:0 3px 14px rgba(0,0,0,0.35)"></div>
<div class="abs" style="left:15px;top:232px;width:740px;height:30px;background:#ffffff;"></div>
<div class="abs ui" style="left:44.6px;top:239px;color:#000;font-size:12.65px">Execute Maven Goal</div>
<div class="abs ui" style="left:27.6px;top:275px;font-size:13.6px">Working <u>d</u>irectory</div>
<div class="abs ui" style="left:27px;top:306px;font-size:13px"><u>C</u>ommand line</div>
<div class="abs" style="left:144px;top:271px;width:556px;height:24px;background:#45494a;border:1px solid #5e6060"></div>
<div class="abs ui" style="left:150px;top:275px;font-size:13px">D:/whale_cloud/code/fujian_iomc/jk_code</div>
<div class="abs" style="left:703px;top:271px;width:24px;height:24px;background:#3c3f41;border:1px solid #5a5d5f;border-radius:3px"></div>
<div class="abs ui" style="left:711px;top:273px;font-size:12px;letter-spacing:-0.3px">...</div>
<div class="abs" style="left:143px;top:300.5px;width:599.5px;height:26px;background:#45494a;border:2px solid #3f78b5;border-radius:4px"></div>
<div class="abs" style="left:147px;top:304px;width:569px;height:17.5px;background:#214283;"></div>
<div class="abs ui" style="left:148px;top:306px;color:#d0d8e4;font-size:13.3px">6-11.2.0.1.0.jar -<span class="wv">DgroupId</span>=com.oracle -<span class="wv">DartifactId</span>=ojdbc6 -<span class="wv">Dversion</span>=11.2.0.1.0 -<span class="wv">Dpackaging</span>=jar</div>
<div class="abs" style="left:716px;top:304px;width:1px;height:18px;background:#e8e8e8;"></div>
<div class="abs" style="left:722px;top:303px;width:1px;height:21px;background:#5e6163;"></div>
<div class="abs" style="left:91px;top:298px;width:647px;height:32px;background:transparent;border:3px solid #f03a3a"></div>
<div class="abs" style="left:588px;top:357px;width:70px;height:26px;background:linear-gradient(#384f6b,#233143);border:1px solid #1e2b3a;border-radius:4px"></div>
<div class="abs ui" style="left:588px;top:362px;width:70px;text-align:center;font-weight:bold;color:#dddddd"><u>E</u>xecute</div>
<div class="abs" style="left:670px;top:357px;width:70px;height:26px;background:linear-gradient(#54595b,#40464a);border:1px solid #606466;border-radius:4px"></div>
<div class="abs ui" style="left:669.5px;top:361.5px;width:70px;text-align:center;font-size:13px">Cancel</div>
<div class="abs" style="left:31px;top:354px;width:23px;height:23px;background:#4a4e50;border:1px solid #5a5e60;border-radius:50%"></div>
<div class="abs ui" style="left:31px;top:357px;width:23px;text-align:center;font-weight:bold;font-size:15px;color:#3d8fc8">?</div>
<!-- stripe icons -->
<svg style="left:1052.5px;top:36px" width="11" height="14" viewBox="0 0 11 14"><path d="M1 1 3.6 4M9.4 1 6.8 4M0 5 3 6.6M10.4 5 7.4 6.6M0 8.6 3 7.8M10.4 8.6 7.4 7.8M0.6 13 3 9.6M9.8 13 7.4 9.6" stroke="#c8cacc" stroke-width="0.8" fill="none"/><ellipse cx="5.2" cy="3.4" rx="2.6" ry="1.8" fill="#b683d6"/><ellipse cx="5.2" cy="6.6" rx="1.7" ry="1.3" fill="#b683d6"/><ellipse cx="5.2" cy="10.4" rx="2.7" ry="2.6" fill="#b683d6"/></svg>
<svg style="left:1050.8px;top:123px" width="14" height="14" viewBox="0 0 14 14"><ellipse cx="6.6" cy="2.4" rx="6.4" ry="2.2" fill="#3a9ccb"/><path d="M0.2 2.4V10.6A6.4 2.2 0 0 0 13 10.6V2.4Z" fill="#3a9ccb"/><path d="M0.2 5.2A6.4 2.2 0 0 0 13 5.2M0.2 8A6.4 2.2 0 0 0 13 8" stroke="#2a6f93" stroke-width="1" fill="none"/></svg>
<svg style="left:1051px;top:211px" width="14" height="12" viewBox="0 0 14 12"><text x="0" y="10.6" font-size="16.5" font-style="italic" font-weight="bold" fill="#3e8fb5" textLength="13.4" lengthAdjust="spacingAndGlyphs">m</text></svg>
<svg style="left:1051.4px;top:333.3px" width="13" height="12" viewBox="0 0 13 12"><path d="M0.4 2.6 4.4 0 9.2 4.8 5.2 7.4Z" fill="#e0a840"/><path d="M0.4 2.6 5.2 7.4V9.6L0.4 4.8Z" fill="#a86e20"/><path d="M5.2 7.4 9.2 4.8V7L5.2 9.6Z" fill="#c88a2c"/><path d="M5.6 8 8 11 12.4 5" stroke="#1fd02a" stroke-width="1.8" fill="none"/></svg>
<!-- dialog icons -->
<svg style="left:23.8px;top:239px" width="14" height="14" viewBox="0 0 14 14"><rect width="14" height="14" fill="#000"/><text x="1.6" y="9" font-size="8.6" font-weight="bold" fill="#fff" textLength="10" lengthAdjust="spacingAndGlyphs">IJ</text><rect x="2" y="11" width="5" height="1.2" fill="#fff"/></svg>
<svg style="left:734px;top:240.5px" width="12" height="12" viewBox="0 0 12 12"><path d="M0.5 0.5 10.5 10.5M10.5 0.5 0.5 10.5" stroke="#000" stroke-width="1.1"/></svg>
<svg style="left:728.6px;top:272.8px" width="15" height="14" viewBox="0 0 15 14"><path d="M0 0H6.4L8 2.2H14.3V12H0Z" fill="#c99a5c"/><rect x="3" y="4.2" width="7.2" height="5.4" fill="#3c3f41"/><rect x="9" y="6.8" width="5.8" height="6.6" fill="#3c3f41"/><rect x="9.6" y="7.4" width="5" height="5.8" fill="#6aa5d8"/></svg>
<svg style="left:727.6px;top:310.6px" width="10" height="8" viewBox="0 0 10 8"><path d="M0 0H8L4 6.4Z" fill="#c4c6c8"/></svg>
<!-- bottom bits -->
<div class="abs" style="left:710px;top:563px;width:330px;height:4px;background:#525557;"></div>
<div class="abs" style="left:1048.7px;top:544.7px;width:46.6px;height:46.6px;border-radius:50%;background:radial-gradient(circle at 40% 35%,#5fd86a,#2fae3c 70%);border:2px solid #f4f4f4;box-shadow:0 0 2px #222, inset 0 0 0 1px #1f8a2c"></div>
<div class="abs ui" style="left:1054.5px;top:560.5px;font-weight:bold;font-size:13px;color:#ffffff">51</div>
</body>
</html>
